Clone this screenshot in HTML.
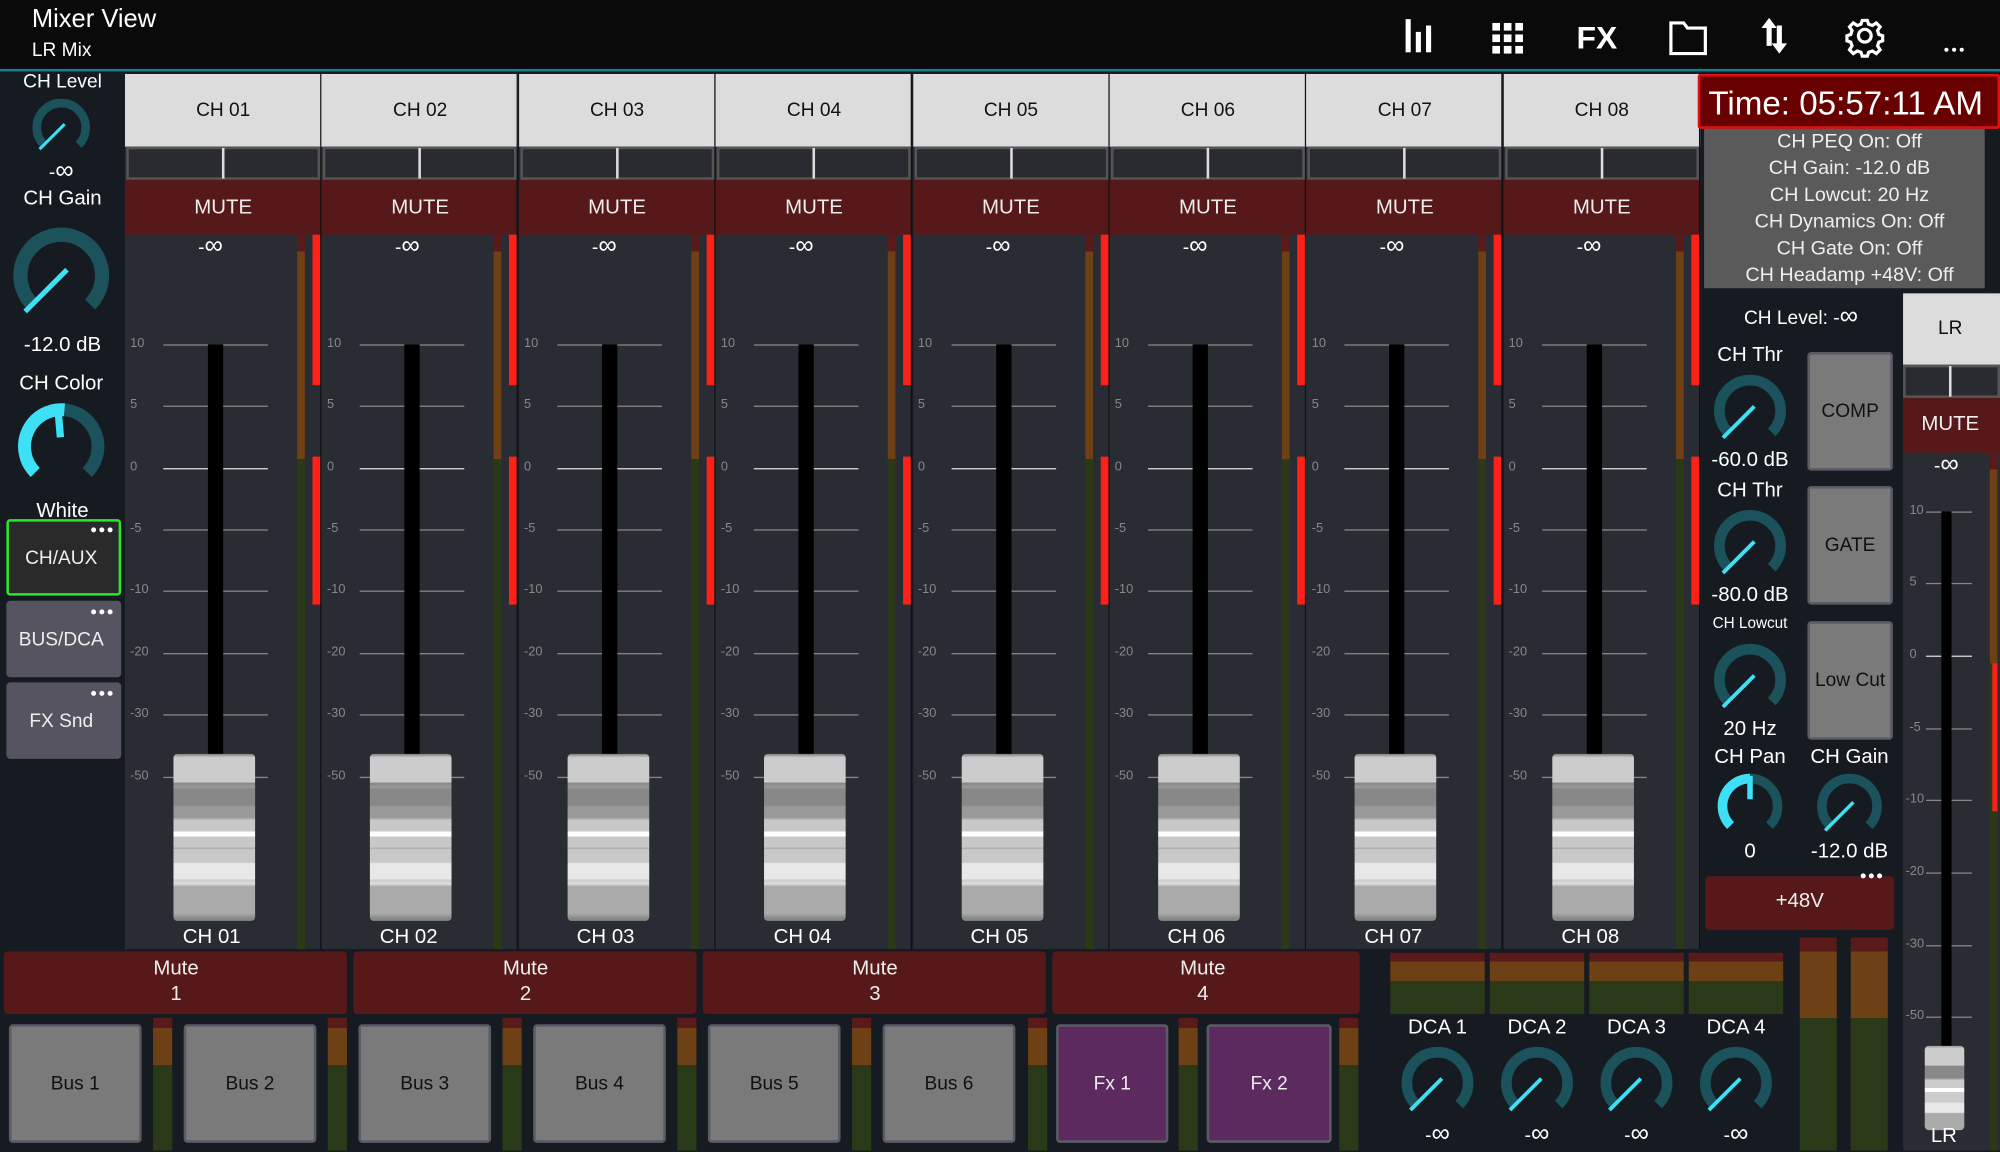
<!DOCTYPE html>
<html><head><meta charset="utf-8"><style>
*{margin:0;padding:0;box-sizing:border-box}
body{width:2000px;height:1151px;overflow:hidden;background:#161b22;font-family:"Liberation Sans",sans-serif;color:#fff}
#root{position:absolute;left:0;top:0;width:1568px;height:903px;transform:scale(1.27551);transform-origin:0 0;background:#161b22}
.a{position:absolute}
.t{position:absolute;white-space:nowrap;transform:translate(-50%,-50%);text-align:center;line-height:1.1}
.hdr{left:0;top:0;width:1568px;height:56px;background:#0a0a0a;border-bottom:2px solid #14808f}
.cap{background:linear-gradient(#777 0,#999 1px,#ccc 3px,#ccc 22px,#888 23px,#9a9a9a 26px,#888 28px,#888 40px,#9a9a9a 42px,#999 50px,#c8c8c8 52px,#c8c8c8 61px,#fff 61px,#fff 65px,#c8c8c8 65px,#c8c8c8 73px,#aaa 74px,#c8c8c8 75px,#c8c8c8 85px,#e8e8e8 86px,#e8e8e8 98px,#ccc 99px,#ddd 102px,#aaa 104px,#aaa 125px,#888 129px);border-radius:3px}
.btn{background:#7a7a7a;border:2px solid #5b5b66;border-radius:3px;color:#111;font-size:15px;display:flex;align-items:center;justify-content:center}
.dots{position:absolute;right:3px;top:1px;font-size:9px;letter-spacing:1px;color:#fff}
</style></head><body><div id="root">
<div class="a hdr"></div>
<div class="a" style="left:25px;top:4px;font-size:20px">Mixer View</div>
<div class="a" style="left:25px;top:31px;font-size:15px">LR Mix</div>
<svg class="a" style="left:1095px;top:10px" width="460" height="36" viewBox="0 0 460 36" fill="#fff">
<rect x="7" y="5" width="4" height="26"/><rect x="15" y="15" width="4" height="16"/><rect x="23" y="10" width="4" height="21"/>
<g transform="translate(75,8)"><rect x="0" y="0" width="6" height="6"/><rect x="9" y="0" width="6" height="6"/><rect x="18" y="0" width="6" height="6"/><rect x="0" y="9" width="6" height="6"/><rect x="9" y="9" width="6" height="6"/><rect x="18" y="9" width="6" height="6"/><rect x="0" y="18" width="6" height="6"/><rect x="9" y="18" width="6" height="6"/><rect x="18" y="18" width="6" height="6"/></g>
<text x="157" y="28" font-size="25" font-family="Liberation Sans" text-anchor="middle" font-weight="bold">FX</text>
<path d="M215 8h10l3 4h14v20h-27z" fill="none" stroke="#fff" stroke-width="2.5"/>
<path d="M292 4l-6 8h4v14h4v-14h4zM300 32l-6-8h4v-14h4v14h4z"/>
<g transform="translate(367,18)" fill="none" stroke="#fff" stroke-width="2.5"><circle r="5"/><path d="M-2-12h4l1 3 3 1 3-2 3 3-2 3 1 3 3 1v4l-3 1-1 3 2 3-3 3-3-2-3 1-1 3h-4l-1-3-3-1-3 2-3-3 2-3-1-3-3-1v-4l3-1 1-3-2-3 3-3 3 2 3-1z"/></g>
<circle cx="431" cy="29" r="1.6"/><circle cx="437" cy="29" r="1.6"/><circle cx="443" cy="29" r="1.6"/>
</svg>
<div id="strips"></div>
<div id="left"></div>
<div id="bottom"></div>
<div id="right"></div>
</div>
<script>
function knob(cx,cy,r,mode){
 const R=40,sw=14;
 function p(th,rad){th=th*Math.PI/180;return [(rad*Math.sin(th)).toFixed(2),(-rad*Math.cos(th)).toFixed(2)]}
 let s=p(-135,R),e=p(135,R);
 let svg=`<path d="M${s[0]} ${s[1]}A${R} ${R} 0 1 1 ${e[0]} ${e[1]}" fill="none" stroke="#1b525c" stroke-width="${sw}"/>`;
 let pa=-135;
 if(mode=='pan'){let m=p(0,R);svg+=`<path d="M${s[0]} ${s[1]}A${R} ${R} 0 0 1 ${m[0]} ${m[1]}" fill="none" stroke="#3de0f5" stroke-width="${sw}"/>`;pa=0;}
 if(mode=='color'){let m=p(5,R);svg+=`<path d="M${s[0]} ${s[1]}A${R} ${R} 0 0 1 ${m[0]} ${m[1]}" fill="none" stroke="#3de0f5" stroke-width="${sw}"/>`;pa=-5;}
 let a,b;
 if(mode=='min'){a=p(pa,-8);b=p(pa,50);svg+=`<line x1="${a[0]}" y1="${a[1]}" x2="${b[0]}" y2="${b[1]}" stroke="#3de0f5" stroke-width="5"/>`;}
 else{a=p(pa,10);b=p(pa,44);svg+=`<line x1="${a[0]}" y1="${a[1]}" x2="${b[0]}" y2="${b[1]}" stroke="#3de0f5" stroke-width="8"/>`;}
 return `<svg class="a" style="left:${cx-r}px;top:${cy-r}px" width="${2*r}" height="${2*r}" viewBox="-50 -50 100 100">${svg}</svg>`;
}
function T(x,y,txt,fs,col,extra){return `<div class="t" style="left:${x}px;top:${y}px;font-size:${fs}px;color:${col||'#fff'};${extra||''}">${txt}</div>`}
const INF='-<span style="font-size:1.35em">∞</span>';
let h='';
const sc=[[10,270],[5,318],[0,367],[-5,415],[-10,463],[-20,512],[-30,560],[-50,609]];
for(let i=0;i<8;i++){
 let x=98+i*154.4, n='CH 0'+(i+1);
 h+=`<div class="a" style="left:${x}px;top:58px;width:154px;height:686px;background:#2a2c33;border-right:1px solid #111"></div>`;
 h+=`<div class="a" style="left:${x}px;top:58px;width:154px;height:57px;background:#dcdcdc;border-right:1px solid #111"></div>`;
 h+=T(x+77,87,n,15,'#111');
 h+=`<div class="a" style="left:${x+1}px;top:115px;width:152px;height:26px;background:#2a2b30;border:2px solid #555"></div>`;
 h+=`<div class="a" style="left:${x+76}px;top:116px;width:2px;height:24px;background:#ddd"></div>`;
 h+=`<div class="a" style="left:${x}px;top:141px;width:154px;height:43px;background:#561819;border-right:1px solid #111"></div>`;
 h+=T(x+77,163,'MUTE',16,'#eee');
 h+=T(x+67,193,INF,15,'#fff');
 h+=`<div class="a" style="left:${x+135}px;top:184px;width:6px;height:560px;background:linear-gradient(#5a1a1a 0,#5a1a1a 13px,#6e4015 13px,#6e4015 176px,#2a3a18 176px)"></div>`;
 h+=`<div class="a" style="left:${x+147}px;top:184px;width:6px;height:118px;background:#ff2018"></div>`;
 h+=`<div class="a" style="left:${x+147}px;top:358px;width:6px;height:116px;background:#ff2018"></div>`;
 for(const [v,y] of sc){h+=`<div class="a" style="left:${x+4}px;top:${y-6}px;font-size:10px;color:#888">${v}</div>`;
  h+=`<div class="a" style="left:${x+30}px;top:${y}px;width:82px;height:1px;background:${v==0?'#ddd':'#888'}"></div>`;}
 h+=`<div class="a" style="left:${x+65}px;top:270px;width:12px;height:322px;background:#000"></div>`;
 h+=`<div class="a cap" style="left:${x+38}px;top:591px;width:64px;height:131px"></div>`;
 h+=T(x+68,735,n,16,'#fff');
}
document.getElementById('strips').innerHTML=h;
h='';
h+=`<div class="a" style="left:0;top:58px;width:97px;height:686px;background:#161b22"></div>`;
h+=T(49,65,'CH Level',15)+knob(48,100,24,'min')+T(48,134,INF,15)+T(49,156,'CH Gain',16)+knob(48,216,40,'min')+T(49,271,'-12.0 dB',16)+T(48,301,'CH Color',16)+knob(48,350,36,'color')+T(49,401,'White',16);
h+=`<div class="a btn" style="left:5px;top:407px;width:90px;height:60px;background:#2a2a2a;border:2px solid #2ce62c;color:#eee;padding-right:4px">CH/AUX<span class="dots">●●●</span></div>`;
h+=`<div class="a btn" style="left:5px;top:471px;width:90px;height:60px;background:#555460;border-color:#555460;color:#eee;padding-right:4px">BUS/DCA<span class="dots">●●●</span></div>`;
h+=`<div class="a btn" style="left:5px;top:535px;width:90px;height:60px;background:#555460;border-color:#555460;color:#eee;padding-right:4px">FX Snd<span class="dots">●●●</span></div>`;
document.getElementById('left').innerHTML=h;
h='';
const mg=[[3,272],[277,546],[551,820],[825,1066]];
mg.forEach((m,i)=>{h+=`<div class="a" style="left:${m[0]}px;top:746px;width:${m[1]-m[0]}px;height:49px;background:#561819;border-radius:3px"></div>`;
 h+=T(i==3?943:m[0]+135,770,'Mute<br>'+(i+1),16,'#eee','line-height:1.25');});
const bus=[[7,111,'Bus 1'],[144,248,'Bus 2'],[281,385,'Bus 3'],[418,522,'Bus 4'],[555,659,'Bus 5'],[692,796,'Bus 6'],[828,916,'Fx 1'],[946,1044,'Fx 2']];
bus.forEach(b=>{let fx=b[2][0]=='F';h+=`<div class="a btn" style="left:${b[0]}px;top:803px;width:${b[1]-b[0]}px;height:93px;${fx?'background:#5c2a5e;color:#eee;':''}">${b[2]}</div>`;});
[120,257,394,531,668,806,924,1050].forEach(x=>{h+=`<div class="a" style="left:${x}px;top:798px;width:15px;height:104px;background:linear-gradient(#5a1a1a 0,#5a1a1a 8px,#6e4015 8px,#6e4015 37px,#2a3a18 37px)"></div>`;});
[1090,1168,1246,1324].forEach((x,i)=>{h+=`<div class="a" style="left:${x}px;top:747px;width:74px;height:48px;background:linear-gradient(#5a1a1a 0,#5a1a1a 7px,#6e4015 7px,#6e4015 22px,#2a3a18 22px)"></div>`;
 h+=T(x+37,806,'DCA '+(i+1),16)+knob(x+37,849,30,'min')+T(x+37,889,INF,15);});
[1411,1451].forEach(x=>{h+=`<div class="a" style="left:${x}px;top:735px;width:29px;height:167px;background:linear-gradient(#5a1a1a 0,#5a1a1a 11px,#6e4015 11px,#6e4015 63px,#2a3a18 63px)"></div>`;});
document.getElementById('bottom').innerHTML=h;
h='';
h+=`<div class="a" style="left:1331px;top:58px;width:237px;height:43px;background:#680000;border:2px solid #e01010;border-radius:2px"></div>`;
h+=T(1447,81,'Time: 05:57:11 AM',26);
h+=`<div class="a" style="left:1336px;top:101px;width:220px;height:125px;background:#5a5a5a"></div>`;
['CH PEQ On: Off','CH Gain: -12.0 dB','CH Lowcut: 20 Hz','CH Dynamics On: Off','CH Gate On: Off','CH Headamp +48V: Off'].forEach((s,i)=>{h+=T(1450,111+i*21,s,15.5,'#eee');});
h+=T(1412,248,'CH Level: '+INF,15);
h+=T(1372,279,'CH Thr',16)+knob(1372,322,30,'min')+T(1372,361,'-60.0 dB',16);
h+=T(1372,385,'CH Thr',16)+knob(1372,428,30,'min')+T(1372,467,'-80.0 dB',16);
h+=T(1372,489,'CH Lowcut',12)+knob(1372,533,30,'min')+T(1372,572,'20 Hz',16);
h+=T(1372,594,'CH Pan',16)+knob(1372,632,27,'pan')+T(1372,668,'0',16);
h+=T(1450,594,'CH Gain',16)+knob(1450,632,27,'min')+T(1450,668,'-12.0 dB',16);
[[276,'COMP'],[381,'GATE'],[487,'Low Cut']].forEach(b=>{h+=`<div class="a btn" style="left:1417px;top:${b[0]}px;width:67px;height:93px">${b[1]}</div>`;});
h+=`<div class="a" style="left:1337px;top:687px;width:148px;height:42px;background:#561819;border-radius:3px"></div>`+T(1411,707,'+48V',16,'#eee')+`<div class="a" style="left:1458px;top:681px;font-size:9px;letter-spacing:1px">●●●</div>`;
h+=`<div class="a" style="left:1492px;top:230px;width:76px;height:672px;background:#2a2c33"></div>`;
h+=`<div class="a" style="left:1492px;top:230px;width:76px;height:56px;background:#dcdcdc"></div>`+T(1529,258,'LR',15,'#111');
h+=`<div class="a" style="left:1492px;top:286px;width:76px;height:26px;background:#2a2b30;border:2px solid #555"></div><div class="a" style="left:1528px;top:287px;width:2px;height:24px;background:#ddd"></div>`;
h+=`<div class="a" style="left:1492px;top:312px;width:76px;height:43px;background:#561819"></div>`+T(1529,333,'MUTE',16,'#eee')+T(1526,364,INF,15);
h+=`<div class="a" style="left:1560px;top:355px;width:6px;height:547px;background:linear-gradient(#5a1a1a 0,#5a1a1a 13px,#6e4015 13px,#6e4015 165px,#2a3a18 165px)"></div>`;
h+=`<div class="a" style="left:1562px;top:520px;width:4px;height:116px;background:#ff2018"></div>`;
[[10,401],[5,457],[0,514],[-5,571],[-10,627],[-20,684],[-30,741],[-50,797]].forEach(([v,y])=>{h+=`<div class="a" style="left:${v<=-10?1494:1497}px;top:${y-6}px;font-size:10px;color:#888">${v}</div><div class="a" style="left:1510px;top:${y}px;width:36px;height:1px;background:${v==0?'#ddd':'#888'}"></div>`;});
h+=`<div class="a" style="left:1522px;top:401px;width:8px;height:420px;background:#000"></div>`;
h+=`<div class="a cap" style="left:1509px;top:820px;width:31px;height:66px;background:linear-gradient(#999 0,#ccc 2px,#ccc 15px,#888 16px,#888 25px,#ccc 27px,#ccc 33px,#fff 33px,#fff 36px,#ccc 36px,#ccc 44px,#e8e8e8 45px,#e8e8e8 52px,#aaa 53px)"></div>`;
h+=T(1524,891,'LR',16);
document.getElementById('right').innerHTML=h;
</script>
</body></html>
